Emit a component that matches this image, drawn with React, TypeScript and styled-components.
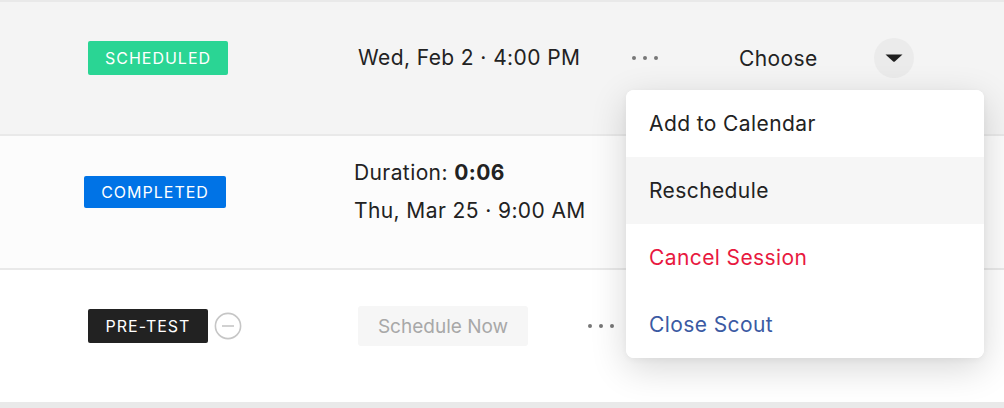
import styled, { createGlobalStyle } from 'styled-components'

const GlobalStyle = createGlobalStyle`
  html, body {
    margin: 0;
    padding: 0;
    background: #e9e9e9;
    font-family: Inter, 'Noto Sans', 'Liberation Sans', sans-serif;
    color: #222;
  }
`

const List = styled.div`
  position: relative;
  display: flex;
  flex-direction: column;
  gap: 2px;
  padding: 2px 0 6px;
  width: 1004px;
`

const Row = styled.div<{ $bg: string }>`
  height: 132px;
  box-sizing: border-box;
  padding-bottom: 20px;
  display: flex;
  align-items: center;
  background: ${(p) => p.$bg};
`

const StatusCell = styled.div<{ $indent: number }>`
  width: 330px;
  box-sizing: border-box;
  padding-left: ${(p) => p.$indent}px;
  display: flex;
  align-items: center;
  gap: 6px;
`

const Badge = styled.span<{ $color: string; $w: number; $h: number }>`
  display: inline-flex;
  align-items: center;
  justify-content: center;
  width: ${(p) => p.$w}px;
  height: ${(p) => p.$h}px;
  background: ${(p) => p.$color};
  color: #fff;
  border-radius: 2px;
  font-size: 16px;
  letter-spacing: 1px;
  text-transform: uppercase;
`

const InfoCell = styled.div<{ $indent: number; $width: number }>`
  margin-left: ${(p) => p.$indent}px;
  width: ${(p) => p.$width}px;
  display: flex;
  flex-direction: column;
  gap: 12px;
  font-size: 21px;
  letter-spacing: 0.4px;
  line-height: 26px;
`

const Bold = styled.b`
  font-weight: 700;
`

const Dots = styled.span`
  display: inline-flex;
  gap: 7px;
  width: 28px;
  & > i {
    width: 4px;
    height: 4px;
    border-radius: 50%;
    background: #777;
  }
`

const ChooseLabel = styled.span`
  margin-left: 79px;
  font-size: 21px;
  letter-spacing: 0.4px;
  width: 135px;
`

const CaretButton = styled.button`
  width: 40px;
  height: 40px;
  border-radius: 50%;
  border: none;
  padding: 0;
  background: #ebebeb;
  display: flex;
  align-items: center;
  justify-content: center;
`

const ScheduleButton = styled.button`
  width: 170px;
  height: 40px;
  border: none;
  border-radius: 3px;
  background: #f6f6f6;
  color: #a8a8a8;
  font-family: inherit;
  font-size: 19px;
  letter-spacing: 0;
  padding: 0;
`

const Menu = styled.ul`
  position: absolute;
  top: 90px;
  left: 626px;
  width: 358px;
  margin: 0;
  padding: 0;
  list-style: none;
  background: #fff;
  border-radius: 8px;
  box-shadow: 0 10px 36px rgba(0, 0, 0, 0.16), 0 2px 6px rgba(0, 0, 0, 0.04);
  overflow: hidden;
`

const MenuItem = styled.li<{ $color?: string; $active?: boolean }>`
  height: 67px;
  display: flex;
  align-items: center;
  padding-left: 23px;
  font-size: 21px;
  letter-spacing: 0.4px;
  color: ${(p) => p.$color || '#222'};
  background: ${(p) => (p.$active ? '#f6f6f6' : '#fff')};
`

const MinusCircle = () => (
  <svg width="28" height="28" viewBox="0 0 28 28">
    <circle cx="14" cy="14" r="12.6" fill="none" stroke="#c6c6c6" strokeWidth="1.6" />
    <line x1="8" y1="14" x2="20" y2="14" stroke="#c6c6c6" strokeWidth="1.6" />
  </svg>
)

const Caret = () => (
  <svg width="18" height="8" viewBox="0 0 18 8">
    <path d="M0.5 0.5 H17.5 L9.8 7.4 Q9 8 8.2 7.4 Z" fill="#1f1f1f" />
  </svg>
)

const ThreeDots = () => (
  <Dots>
    <i />
    <i />
    <i />
  </Dots>
)

const App = () => {
  return (
    <>
      <GlobalStyle />
      <List>
        <Row $bg="#f4f4f4">
          <StatusCell $indent={88}>
            <Badge $color="#2ad594" $w={140} $h={34}>Scheduled</Badge>
          </StatusCell>
          <InfoCell $indent={28} $width={274}>
            <span>Wed, Feb 2 · 4:00 PM</span>
          </InfoCell>
          <ThreeDots />
          <ChooseLabel>Choose</ChooseLabel>
          <CaretButton>
            <Caret />
          </CaretButton>
        </Row>
        <Row $bg="#fcfcfc">
          <StatusCell $indent={84}>
            <Badge $color="#0073e6" $w={142} $h={32}>Completed</Badge>
          </StatusCell>
          <InfoCell $indent={24} $width={278}>
            <span>
              Duration: <Bold>0:06</Bold>
            </span>
            <span>Thu, Mar 25 · 9:00 AM</span>
          </InfoCell>
        </Row>
        <Row $bg="#ffffff">
          <StatusCell $indent={88}>
            <Badge $color="#222222" $w={120} $h={34}>Pre-Test</Badge>
            <MinusCircle />
          </StatusCell>
          <InfoCell $indent={28} $width={230}>
            <ScheduleButton>Schedule Now</ScheduleButton>
          </InfoCell>
          <ThreeDots />
        </Row>
        <Menu>
          <MenuItem>Add to Calendar</MenuItem>
          <MenuItem $active>Reschedule</MenuItem>
          <MenuItem $color="#e8193f">Cancel Session</MenuItem>
          <MenuItem $color="#3b5aa3">Close Scout</MenuItem>
        </Menu>
      </List>
    </>
  )
}

export default App
